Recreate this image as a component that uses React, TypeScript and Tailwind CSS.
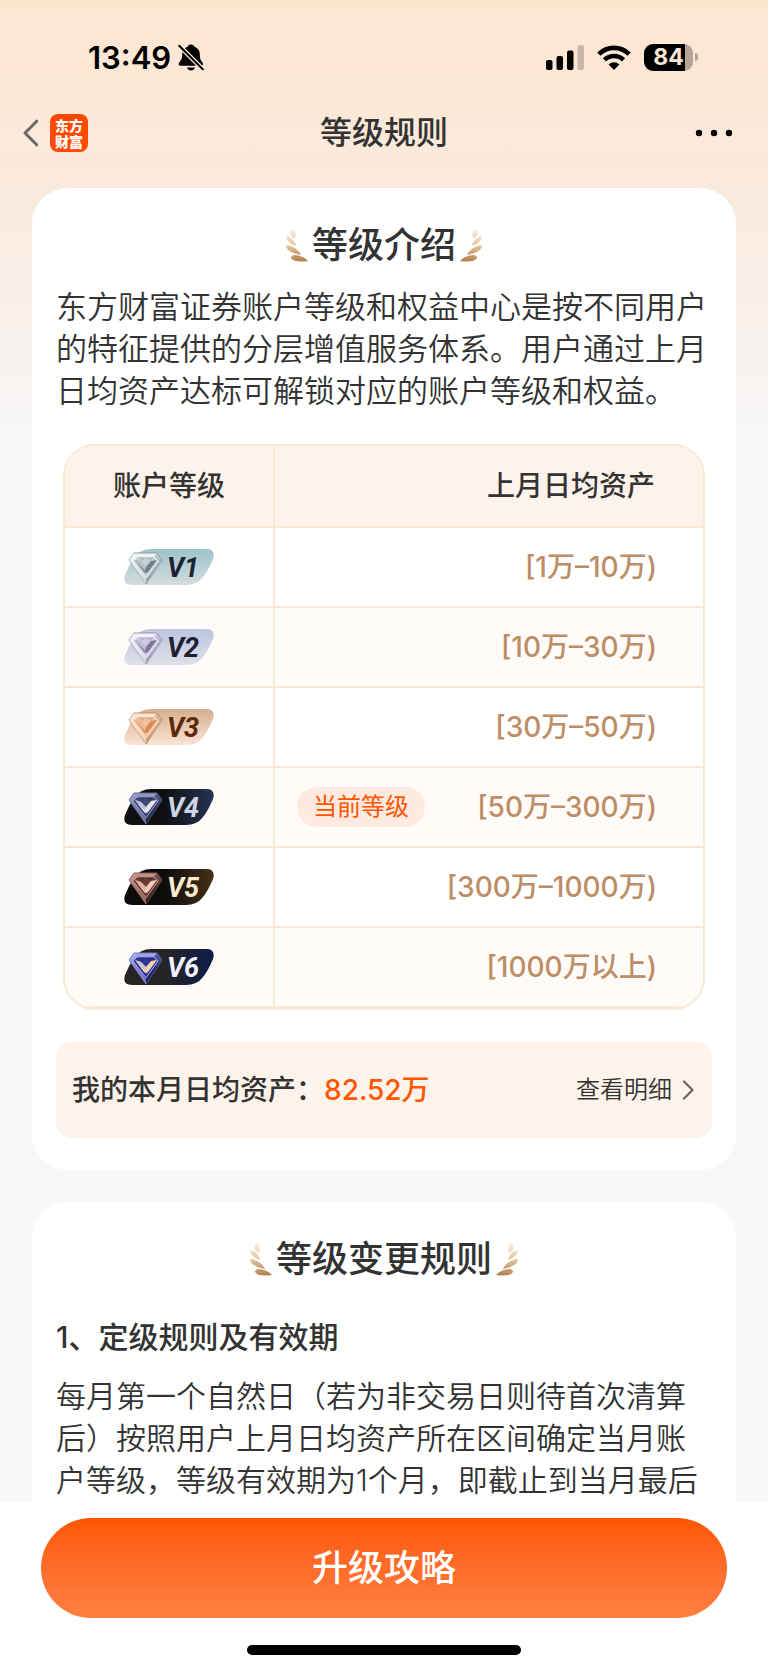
import React from "react";

type Palette = {
  id: string;
  range: string;
  current?: boolean;
  pill: [string, string];
  horizontal?: boolean;
  text: string;
  rim: string;
  light: string;
  mid: string;
  dark: string;
  mark: string;
};

const LEVELS: Palette[] = [
  { id: "V1", range: "[1万–10万)", pill: ["#9dc3cb", "#d3dcde"], text: "#1c2233", rim: "#8b9a9e", light: "#f3f8f9", mid: "#c4d0d3", dark: "#8d9b9f", mark: "#6f7f84" },
  { id: "V2", range: "[10万–30万)", pill: ["#bcc5df", "#dedfe9"], text: "#1c2233", rim: "#9a93aa", light: "#f8f5fd", mid: "#d2c9e4", dark: "#9c93b3", mark: "#7c7898" },
  { id: "V3", range: "[30万–50万)", pill: ["#d6ae90", "#fbe3d4"], text: "#5d2a07", rim: "#b58d74", light: "#ffe9d6", mid: "#f3c19c", dark: "#c08f6f", mark: "#d6885a" },
  { id: "V4", range: "[50万–300万)", current: true, pill: ["#0f1012", "#263354"], horizontal: true, text: "#cdd5e0", rim: "#5b6488", light: "#98a1d0", mid: "#3e4774", dark: "#1e2340", mark: "#e7e7ea" },
  { id: "V5", range: "[300万–1000万)", pill: ["#0d0c0a", "#44311a"], horizontal: true, text: "#faebd0", rim: "#7d5b57", light: "#cf998e", mid: "#6a3c37", dark: "#2c1a19", mark: "#f3cbbb" },
  { id: "V6", range: "[1000万以上)", pill: ["#262424", "#0c1c48"], horizontal: true, text: "#f2f0ff", rim: "#6f72b8", light: "#a9b2f6", mid: "#30349a", dark: "#141650", mark: "#f6d3a8" },
];

function LevelBadge({ level }: { level: Palette }) {
  const fill = `pill-${level.id}`;
  const gem = `gem-${level.id}`;
  return (
    <svg viewBox="0 0 90 36" className="mx-auto block h-9 w-[90px]" role="img" aria-label={level.id}>
      <defs>
        <linearGradient id={fill} x1="0" y1="0" x2={level.horizontal ? "1" : "0"} y2={level.horizontal ? "0" : "1"}>
          <stop offset={level.horizontal ? "0.45" : "0"} stopColor={level.pill[0]} />
          <stop offset="1" stopColor={level.pill[1]} />
        </linearGradient>
        <linearGradient id={gem} x1="0" y1="0" x2="0" y2="1">
          <stop offset="0" stopColor={level.light} />
          <stop offset="0.55" stopColor={level.mid} />
          <stop offset="1" stopColor={level.dark} stopOpacity="0.7" />
        </linearGradient>
      </defs>
      <path d="M27 0H82Q92 0 89 10Q84 22 79 28Q73 36 62 36H8Q-2 36 1 26Q5 16 10 9Q16 0 27 0Z" fill={`url(#${fill})`} />
      <path d="M10 4H33L38 11L22 35L5 11Z" fill={`url(#${gem})`} stroke={level.rim} strokeWidth="1" strokeLinejoin="round" />
      <path d="M5 11L10 4L13 8L9 12L22 30V35Z" fill={level.light} opacity="0.6" />
      <path d="M38 11L33 4L30 8L34 12L22 30V35Z" fill={level.dark} opacity="0.5" />
      <path d="M13 8H30L34 12L22 29L9 12Z" fill={level.mid} stroke={level.light} strokeWidth="1" />
      <path d="M13 8L18 12L22 9L27 12L30 8Z" fill={level.dark} opacity="0.35" />
      <path d="M11 11L17 13L22 18L27 12L33 11L24 23Q22 25 20 23Z" fill={level.mark} />
      <path d="M11 11L17 13L22 18L21 22Z" fill={level.light} opacity="0.55" />
      <text x="43" y="28" fill={level.text} className="text-[27px] font-bold italic [font-family:Roboto,sans-serif]">
        {level.id}
      </text>
    </svg>
  );
}

function Leaves({ id, flip = false }: { id: string; flip?: boolean }) {
  return (
    <svg viewBox="0 0 22 33" className={flip ? "h-[33px] w-[22px] -scale-x-100" : "h-[33px] w-[22px]"} aria-hidden="true">
      <defs>
        <linearGradient id={id} gradientUnits="userSpaceOnUse" x1="6" y1="0" x2="14" y2="33">
          <stop offset="0" stopColor="#fbefe4" />
          <stop offset="0.45" stopColor="#e6c5a0" />
          <stop offset="1" stopColor="#b17f4d" />
        </linearGradient>
      </defs>
      <g fill={`url(#${id})`}>
        <path d="M9 10Q4 7 4 4Q5 1 7 0Q11 4 9 10Z" />
        <path d="M10 17Q1 14 0 8Q2 7 5 9Q9 12 10 17Z" />
        <path d="M15 26Q3 24 0 18Q0 16 2 16Q12 19 15 26Z" />
        <path d="M22 32Q8 34 5 29Q5 26 9 26Q18 27 22 32Z" />
      </g>
    </svg>
  );
}

function SectionTitle({ id, children }: { id: string; children: React.ReactNode }) {
  return (
    <div className="flex items-center justify-center gap-1">
      <Leaves id={`${id}-left`} />
      <h2 className="text-[36px] leading-[54px] font-medium">{children}</h2>
      <Leaves id={`${id}-right`} flip />
    </div>
  );
}

function StatusBar() {
  return (
    <div className="flex h-[92px] items-center justify-between pt-[22px] pr-[70px] pl-[88px] text-black">
      <div className="flex items-center gap-[7px]">
        <span className="text-[31px] leading-none font-semibold">13:49</span>
        <svg viewBox="0 0 26 27" className="h-[27px] w-[26px]" aria-label="静音">
          <path d="M13 0.500C11 0.500 9.800 1.600 9.500 2.800C6 4 4.200 7 4.200 10C4.200 15 3 16.500 1 18.700C0 20 0.800 21.800 2.500 21.800H23C25 21.800 25.600 19.800 24.500 18.400C22.500 16.300 21.800 14.500 21.800 10C21.800 7 20 4 16.500 2.800C16.200 1.600 15 0.500 13 0.500Z" />
          <path d="M9 23.500H17C16.400 25.500 15 26.500 13 26.500S9.600 25.500 9 23.500Z" />
          <path d="M0 0.500L26 26.500" stroke="#fae7d6" strokeWidth="4.600" />
          <path d="M1.200 1.700L24.800 25.300" stroke="#000" strokeWidth="2" strokeLinecap="round" />
        </svg>
      </div>
      <div className="flex items-center gap-[13px]">
        <svg viewBox="0 0 38 25" className="h-[25px] w-[38px]" aria-label="信号">
          <rect x="0" y="15" width="6.500" height="10" rx="2" />
          <rect x="10.500" y="11" width="6.500" height="14" rx="2" />
          <rect x="21" y="5.500" width="6.500" height="19.500" rx="2" />
          <rect x="31.500" y="0" width="6.500" height="25" rx="2" opacity="0.2" />
        </svg>
        <svg viewBox="0 0 34 25" className="h-[25px] w-[34px]" aria-label="无线网络">
          <g fill="none" stroke="#000" strokeWidth="4.600">
            <path d="M1.800 9.200A21.500 21.500 0 0 1 32.200 9.200" />
            <path d="M7.500 14.900A13.400 13.400 0 0 1 26.500 14.900" />
          </g>
          <path d="M17 25L11.600 19.400A7.700 7.700 0 0 1 22.400 19.400Z" />
        </svg>
        <div className="flex items-center gap-0.5">
          <div className="flex h-[27px] w-[49px] items-center justify-center rounded-[9px] bg-[linear-gradient(to_right,#000_84%,#b3a496_84%)] text-[23px] leading-none font-bold text-[#fbe7d5]">
            84
          </div>
          <div className="h-2 w-[3px] rounded-r-full bg-[#b3a496]" />
        </div>
      </div>
    </div>
  );
}

function NavBar() {
  return (
    <header className="grid h-[82px] grid-cols-[1fr_auto_1fr] items-center px-[22px]">
      <div className="flex items-center gap-3">
        <button type="button" aria-label="返回" className="block">
          <svg viewBox="0 0 16 28" className="h-7 w-4" fill="none" stroke="#6a6866" strokeWidth="3" strokeLinecap="round" strokeLinejoin="round">
            <path d="M15 2L3 14L15 26" />
          </svg>
        </button>
        <a href="#home" className="flex h-[38px] w-[38px] items-center justify-center rounded-lg bg-[#ff4800]">
          <span className="w-7 text-[14px] leading-4 font-black text-white [font-family:'Noto_Sans_CJK_SC',sans-serif]">东方财富</span>
        </a>
      </div>
      <h1 className="text-[32px] leading-[48px] font-medium">等级规则</h1>
      <button type="button" aria-label="更多" className="mr-[13px] justify-self-end">
        <svg viewBox="0 0 38 8" className="h-2 w-[38px]">
          <circle cx="4" cy="4" r="3.200" />
          <circle cx="19" cy="4" r="3.200" />
          <circle cx="34" cy="4" r="3.200" />
        </svg>
      </button>
    </header>
  );
}

export default function App() {
  return (
    <div className="flex min-h-screen flex-col bg-[#f8f8fb] bg-[linear-gradient(to_bottom,#fde6d0_0,#faeadd_190px,#f8f1ec_330px,#f8f8fb_470px)] text-[#333] [font-family:Inter,'Noto_Sans_CJK_SC',sans-serif]">
      <StatusBar />
      <NavBar />

      <main className="flex grow flex-col gap-8 px-8 pt-3.5">
        <section className="rounded-[36px] bg-white px-6 pt-[30px] pb-8">
          <SectionTitle id="intro">等级介绍</SectionTitle>
          <p className="mt-3.5 text-[31px] leading-[42px] font-[350]">
            东方财富证券账户等级和权益中心是按不同用户的特征提供的分层增值服务体系。用户通过上月日均资产达标可解锁对应的账户等级和权益。
          </p>

          <div className="mx-[7px] mt-8 overflow-hidden rounded-[32px] border-2 border-[#f8e9d4]">
            <table className="w-full border-separate border-spacing-0 text-[28px] leading-[42px]">
              <thead>
                <tr className="bg-[#fef3eb]">
                  <th scope="col" className="h-[82px] w-[210px] border-r-2 border-b-2 border-[#f8e9d4] p-0 text-center font-medium">
                    账户等级
                  </th>
                  <th scope="col" className="border-b-2 border-[#f8e9d4] p-0 pr-12 text-right font-medium">
                    上月日均资产
                  </th>
                </tr>
              </thead>
              <tbody>
                {LEVELS.map((level) => (
                  <tr key={level.id} className="even:bg-[#fffbf8]">
                    <td className="h-20 border-r-2 border-b-2 border-[#f8e9d4] p-0">
                      <LevelBadge level={level} />
                    </td>
                    <td className="border-b-2 border-[#f8e9d4] p-0 pr-[46px] pl-[22px]">
                      <div className="flex items-center">
                        {level.current && (
                          <span className="rounded-full bg-[#ffeae0] px-4 text-[24px] leading-10 text-[#ff5500]">当前等级</span>
                        )}
                        <span className="ml-auto font-medium text-[#bd8d66]">{level.range}</span>
                      </div>
                    </td>
                  </tr>
                ))}
              </tbody>
            </table>
          </div>

          <div className="mt-8 flex h-24 items-center justify-between rounded-2xl bg-[#fef3eb] pr-[18px] pl-4">
            <p className="text-[28px] leading-[42px] font-medium">
              我的本月日均资产：<span className="text-[#ff5500]">82.52万</span>
            </p>
            <a href="#detail" className="flex items-center gap-2.5 text-[24px] leading-9 font-[350]">
              查看明细
              <svg viewBox="0 0 12 20" className="h-5 w-3" fill="none" stroke="#6a6866" strokeWidth="2.200" strokeLinecap="round" strokeLinejoin="round" aria-hidden="true">
                <path d="M2 1.500L10.500 10L2 18.500" />
              </svg>
            </a>
          </div>
        </section>

        <section className="grow rounded-t-[36px] bg-white px-6 pt-[30px]">
          <SectionTitle id="change">等级变更规则</SectionTitle>
          <h3 className="mt-[30px] text-[30px] leading-[42px] font-medium">1、定级规则及有效期</h3>
          <p className="mt-[17px] pb-px text-[30px] leading-[42px] font-[350]">
            每月第一个自然日（若为非交易日则待首次清算后）按照用户上月日均资产所在区间确定当月账户等级，等级有效期为1个月，即截止到当月最后
          </p>
        </section>
      </main>

      <footer className="sticky bottom-0 flex flex-col items-center bg-white px-[41px] pt-4 pb-3.5">
        <button
          type="button"
          className="h-[100px] w-full rounded-full bg-linear-to-b from-[#ff5500] to-[#ff8040] text-[36px] leading-[54px] font-medium text-white"
        >
          升级攻略
        </button>
        <div className="mt-[27px] h-2.5 w-[274px] rounded-full bg-black" />
      </footer>
    </div>
  );
}
